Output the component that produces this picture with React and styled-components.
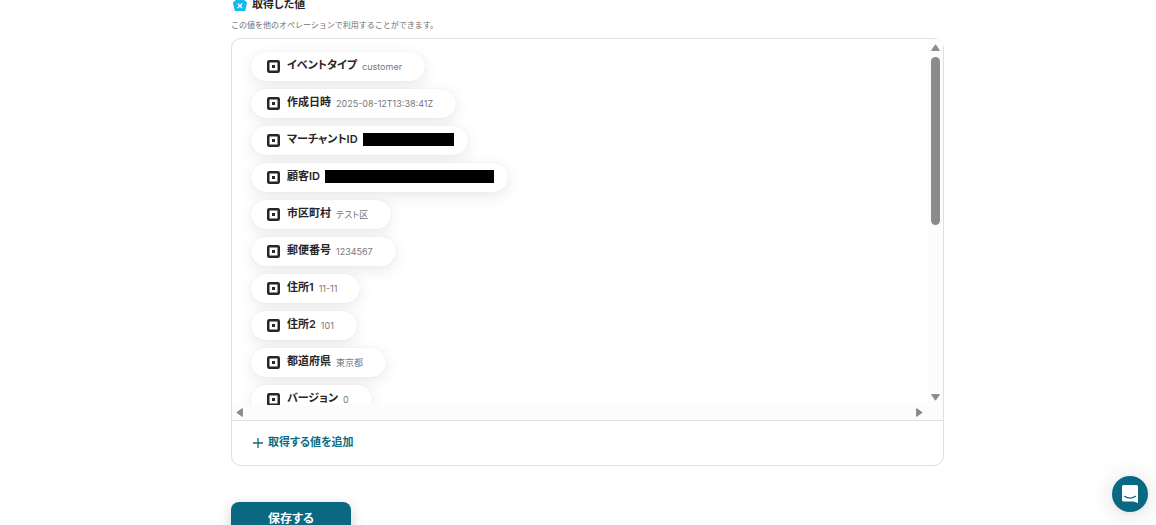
import React from 'react'
import styled, { createGlobalStyle } from 'styled-components'

const GlobalStyle = createGlobalStyle`
  * {
    box-sizing: border-box;
  }

  body {
    margin: 0;
    height: 100vh;
    overflow: hidden;
    background: #fff;
    color: #282525;
    font-family: Inter, 'Noto Sans CJK JP', sans-serif;
    font-feature-settings: 'palt';
  }
`

const Page = styled.main`
  padding: 0 212px 0 231px;
`

const Heading = styled.h2`
  display: flex;
  align-items: center;
  gap: 4px;
  height: 9px;
  margin: 0;
  font-size: 11px;
  font-weight: 600;
  line-height: 9px;
`

const Description = styled.p`
  margin: 10px 0 6px;
  color: #707070;
  font-size: 8px;
  font-feature-settings: normal;
  line-height: 13px;
`

const Panel = styled.section`
  border: 1px solid #e0e0e0;
  border-radius: 10px;
`

const ScrollArea = styled.div`
  display: grid;
  grid-template-columns: 1fr 15px;
  grid-template-rows: 366px 15px;
`

const List = styled.ul`
  display: flex;
  flex-direction: column;
  align-items: flex-start;
  gap: 8px;
  margin: 0;
  padding: 13px 19px;
  list-style: none;
  overflow: hidden;
`

const Pill = styled.li`
  display: flex;
  flex: none;
  align-items: center;
  height: 29px;
  padding: 0 ${({ $masked }) => ($masked ? 14 : 23)}px 0 16px;
  border-radius: 15px;
  background: #fff;
  box-shadow: 0 0 1px rgba(0, 0, 0, 0.12), 0 4px 16px rgba(0, 0, 0, 0.09);
  white-space: nowrap;
`

const Label = styled.span`
  margin: 0 5px 4px 7px;
  font-size: 11px;
  font-weight: 600;
  line-height: 16px;
`

const Value = styled.span`
  color: #777;
  font-size: 9px;
  line-height: 14px;
`

const Mask = styled.span`
  width: ${({ $width }) => $width}px;
  height: 13px;
  margin-bottom: 2px;
  background: #000;
`

const VerticalBar = styled.div`
  display: flex;
  flex-direction: column;
  align-items: center;
  padding: 4px 0 3px;
  background: #fcfcfc;
`

const Thumb = styled.div`
  width: 9px;
  height: 168px;
  margin: 5px 0 auto;
  border-radius: 5px;
  background: #8b8b8b;
`

const HorizontalBar = styled.div`
  display: flex;
  grid-column: 1 / 3;
  align-items: center;
  justify-content: space-between;
  padding: 0 19px 0 3px;
  background: #fcfcfc;
`

const Footer = styled.div`
  display: flex;
  align-items: center;
  height: 45px;
  padding: 0 20px 2px;
  border-top: 1px solid #e0e0e0;
`

const AddButton = styled.button`
  display: flex;
  align-items: center;
  gap: 4px;
  padding: 0;
  border: 0;
  background: none;
  color: #0b6b82;
  font: inherit;
  font-size: 11px;
  font-weight: 600;
  line-height: 16px;
  cursor: pointer;
`

const SaveButton = styled.button`
  width: 120px;
  height: 34px;
  margin-top: 36px;
  padding: 0;
  border: 0;
  border-radius: 8px;
  background: #0b6882;
  box-shadow: 0 4px 14px rgba(0, 0, 0, 0.18);
  color: #fff;
  font: inherit;
  font-size: 12px;
  font-weight: 700;
  line-height: 34px;
  cursor: pointer;
`

const ChatButton = styled.button`
  position: fixed;
  right: 8px;
  bottom: 13px;
  display: flex;
  align-items: center;
  justify-content: center;
  width: 36px;
  height: 36px;
  padding: 0;
  border: 0;
  border-radius: 50%;
  background: #0b6882;
  box-shadow: 0 1px 5px rgba(0, 0, 0, 0.06), 0 2px 24px rgba(0, 0, 0, 0.14);
  cursor: pointer;
`

const VariableIcon = () => (
  <svg width="17" height="16" viewBox="0 0 17 16" aria-hidden="true">
    <path
      d="M9 2 14.5 6 13 12.6H5L3.5 6Z"
      fill="#12baed"
      stroke="#12baed"
      strokeWidth="3"
      strokeLinejoin="round"
    />
    <path d="M6.8 6.6 11 11M11.2 6.6 6.6 11" stroke="#fff" strokeWidth="1.3" />
  </svg>
)

const SquareIcon = () => (
  <svg width="13" height="13" viewBox="0 0 13 13" aria-hidden="true">
    <rect x="1.25" y="1.25" width="10.5" height="10.5" rx="1" fill="#fff" stroke="#282525" strokeWidth="2.5" />
    <rect x="5" y="5" width="3" height="3" fill="#282525" />
  </svg>
)

const Arrow = ({ angle = 0 }) => (
  <svg width="9" height="9" viewBox="0 0 9 9" aria-hidden="true">
    <path
      d="M4.5 1.8 8.4 7.4H0.6Z"
      transform={`rotate(${angle} 4.5 4.5)`}
      fill="#8b8b8b"
      stroke="#8b8b8b"
      strokeLinejoin="round"
    />
  </svg>
)

const PlusIcon = () => (
  <svg width="12" height="12" viewBox="0 0 12 12" aria-hidden="true">
    <path d="M6 2V12M1 7H11" stroke="#0b6b82" strokeWidth="1.3" />
  </svg>
)

const ChatIcon = () => (
  <svg width="18" height="20" viewBox="0 0 18 20" aria-hidden="true">
    <path d="M2.5 1H15.5Q17 1 17 2.5V19L12.5 17.5H2.5Q1 17.5 1 16V2.5Q1 1 2.5 1Z" fill="#fff" />
    <path d="M3.5 12.3Q9 16 14.5 12.3" fill="none" stroke="#0b6882" strokeWidth="1.2" strokeLinecap="round" />
  </svg>
)

const fields = [
  { label: 'イベントタイプ', value: 'customer' },
  { label: '作成日時', value: '2025-08-12T13:38:41Z' },
  { label: 'マーチャントID', mask: 91 },
  { label: '顧客ID', mask: 169 },
  { label: '市区町村', value: 'テスト区' },
  { label: '郵便番号', value: '1234567' },
  { label: '住所1', value: '11-11' },
  { label: '住所2', value: '101' },
  { label: '都道府県', value: '東京都' },
  { label: 'バージョン', value: '0' },
]

const App = () => (
  <>
    <GlobalStyle />
    <Page>
      <Heading>
        <VariableIcon />
        取得した値
      </Heading>
      <Description>この値を他のオペレーションで利用することができます。</Description>

      <Panel>
        <ScrollArea>
          <List>
            {fields.map(({ label, value, mask }) => (
              <Pill key={label} $masked={Boolean(mask)}>
                <SquareIcon />
                <Label>{label}</Label>
                {mask ? <Mask $width={mask} /> : <Value>{value}</Value>}
              </Pill>
            ))}
          </List>
          <VerticalBar>
            <Arrow />
            <Thumb />
            <Arrow angle={180} />
          </VerticalBar>
          <HorizontalBar>
            <Arrow angle={270} />
            <Arrow angle={90} />
          </HorizontalBar>
        </ScrollArea>
        <Footer>
          <AddButton type="button">
            <PlusIcon />
            取得する値を追加
          </AddButton>
        </Footer>
      </Panel>

      <SaveButton type="button">保存する</SaveButton>
    </Page>
    <ChatButton type="button" aria-label="チャットを開く">
      <ChatIcon />
    </ChatButton>
  </>
)

export default App
